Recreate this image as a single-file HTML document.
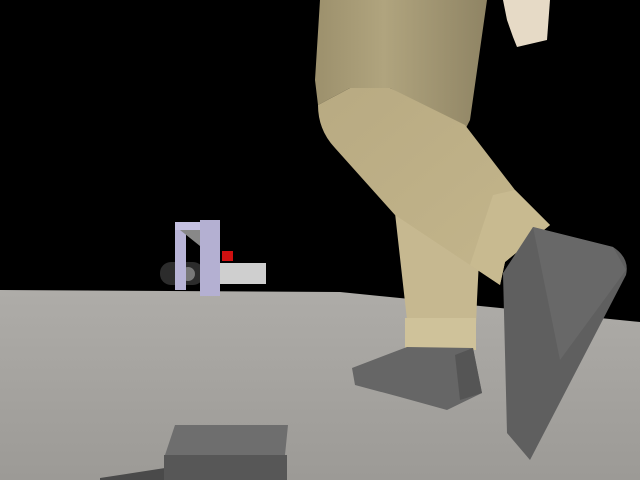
<!DOCTYPE html>
<html><head><style>html,body{margin:0;padding:0;background:#000;width:640px;height:480px;overflow:hidden}</style></head>
<body>
<svg width="640" height="480" viewBox="0 0 640 480" xmlns="http://www.w3.org/2000/svg">
<defs>
<linearGradient id="th" x1="0" y1="0" x2="1" y2="0"><stop offset="0" stop-color="#9c906c"/><stop offset="0.4" stop-color="#b0a47e"/><stop offset="1" stop-color="#8f8464"/></linearGradient>
<linearGradient id="fl" x1="0" y1="0" x2="0" y2="1"><stop offset="0" stop-color="#aeaca8"/><stop offset="1" stop-color="#9c9a96"/></linearGradient>
<linearGradient id="sh" x1="0" y1="0" x2="1" y2="1"><stop offset="0" stop-color="#b8aa82"/><stop offset="1" stop-color="#c4b68c"/></linearGradient>
</defs>
<rect width="640" height="480" fill="#000"/>
<polygon points="0,290 340,292 640,322 640,480 0,480" fill="url(#fl)"/>
<!-- machine -->
<rect x="160" y="262" width="44" height="23" rx="11" fill="#2c2c2c"/>
<circle cx="188" cy="274" r="7" fill="#777"/>
<rect x="200" y="263" width="66" height="21" fill="#cfcfcf"/>
<rect x="222" y="251" width="11" height="10" fill="#d01010"/>
<rect x="175" y="222" width="11" height="68" fill="#b8b4d6"/>
<rect x="175" y="222" width="40" height="8" fill="#c4c0e0"/>
<polygon points="180,230 200,230 200,246" fill="#888"/>
<rect x="200" y="220" width="20" height="76" fill="#b4b0d2"/>
<!-- back lower leg -->
<polygon points="395,213 480,240 477,300 475,350 407,350 407,320" fill="#c6b890"/>
<rect x="405" y="318" width="71" height="32" fill="#cfc29a"/>
<!-- back shoe -->
<polygon points="352,368 407,347 473,348 482,393 447,410 400,397 355,385" fill="#666"/>
<polygon points="455,355 473,348 482,393 460,400" fill="#555"/>
<!-- thigh -->
<polygon points="320,0 487,0 470,120 465,130 390,88 350,88 318,105 315,80" fill="url(#th)"/>
<!-- shin -->
<path d="M318,105 L350,88 L390,88 L465,125 L515,190 L550,225 L505,262 L500,285 L395,215 L335,148 Q318,130 318,105 Z" fill="url(#sh)"/>
<polygon points="493,195 515,190 550,225 505,262 500,285 470,265" fill="#c8ba90"/>
<!-- front shoe -->
<path d="M533,227 L613,247 Q630,258 626,275 L530,460 L507,433 L503,273 Z" fill="#5f5f5f"/>
<polygon points="533,227 613,247 626,270 560,360" fill="#686868"/>
<!-- hand -->
<polygon points="503,0 550,0 547,40 517,47 513,37 507,20" fill="#e6dac6"/>
<!-- block -->
<polygon points="100,478 165,468 165,480 100,480" fill="#4a4a4a"/>
<polygon points="175,425 288,425 285,455 165,455" fill="#6e6e6e"/>
<rect x="164" y="455" width="123" height="25" fill="#575757"/>
</svg>
</body></html>
